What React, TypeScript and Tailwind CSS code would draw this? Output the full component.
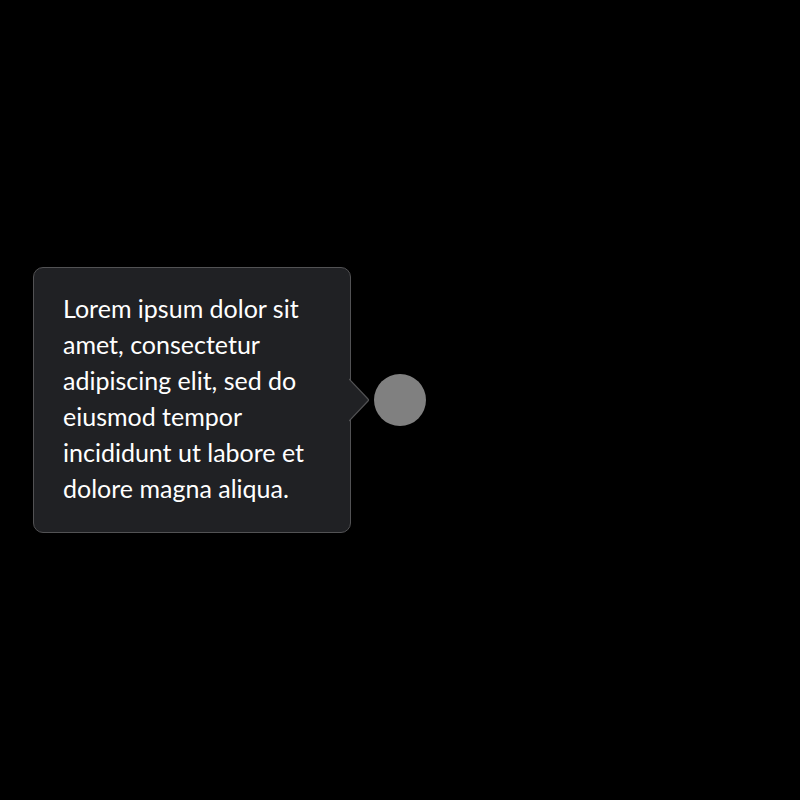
import React from "react";

const text = "Lorem ipsum dolor sit amet, consectetur adipiscing elit, sed do eiusmod tempor incididunt ut labore et dolore magna aliqua.";

export default function App() {
    return (
        <div className="w-full h-[800px] bg-black flex items-center pl-[33px]" style={{fontFamily: "Lato, 'Open Sans', sans-serif"}}>
            <div className="relative w-[318px] rounded-[10px] border border-[#525254] bg-[#202124] px-[29px] pt-[22px] pb-[26px]">
                <p className="text-white text-[25px] leading-[36px]">{text}</p>
                <svg className="absolute top-1/2 -translate-y-1/2 -right-[20px]" width="21" height="44" viewBox="0 0 21 44">
                    <path d="M0 1 L19 21 Q20 22 19 23 L0 43" fill="#202124" stroke="#525254" strokeWidth="1.2"/>
                </svg>
            </div>
            <div className="ml-[23px] w-[52px] h-[52px] rounded-full bg-[#808080]"/>
        </div>
    );
}
